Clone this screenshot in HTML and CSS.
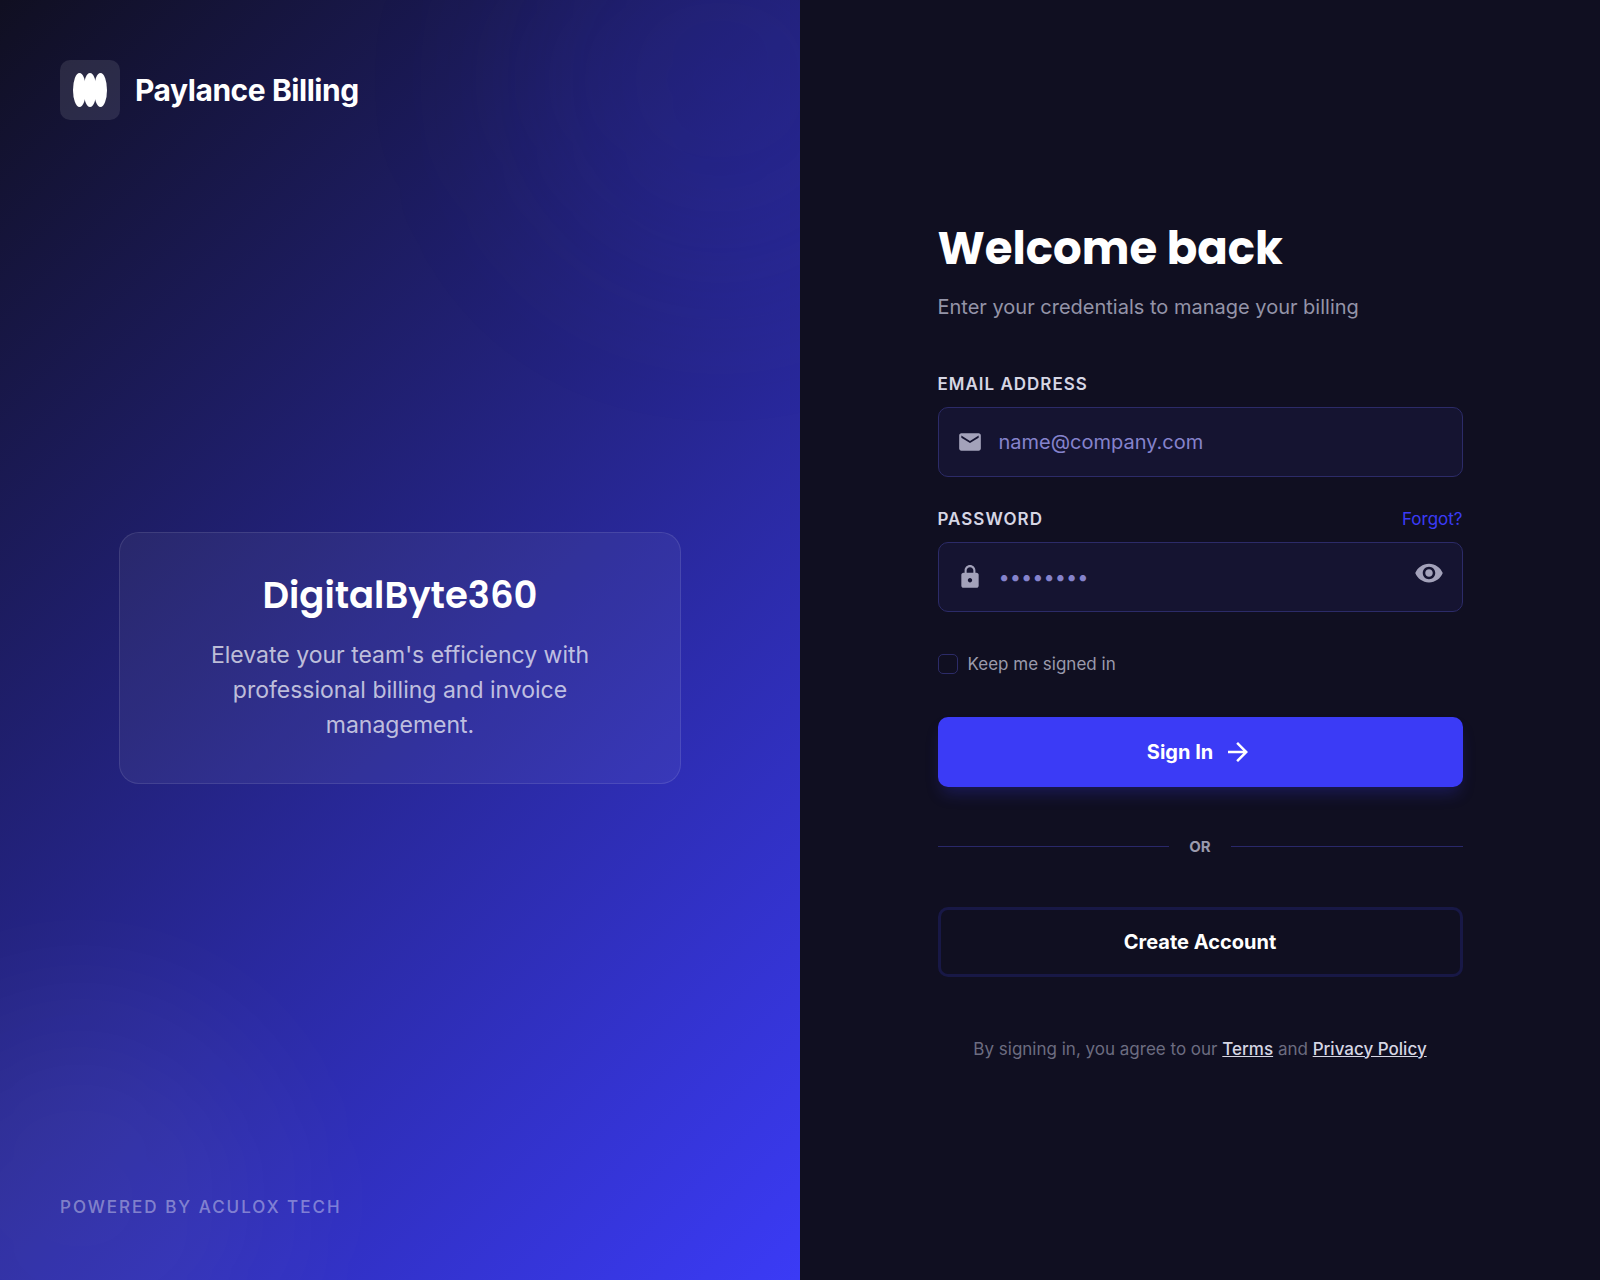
FILE: index.html
```
<!DOCTYPE html>
<html lang="en">
<head>
  <meta charset="UTF-8">
  <meta name="viewport" content="width=device-width, initial-scale=1.0">
  <title>Paylance Billing - Sign In</title>
  <link rel="stylesheet" href="styles.css">
</head>
<body>

<div class="page">
  <aside class="brand-panel">
    <div class="brand">
      <div class="brand-logo">
        <svg width="36" height="36" viewBox="0 0 36 36" fill="#fff" aria-hidden="true">
          <ellipse cx="7.500" cy="18" rx="6.500" ry="17"/>
          <ellipse cx="18" cy="18" rx="6.500" ry="17"/>
          <ellipse cx="28.500" cy="18" rx="6.500" ry="17"/>
        </svg>
      </div>
      <span class="brand-name">Paylance Billing</span>
    </div>

    <div class="promo">
      <h2>DigitalByte360</h2>
      <p>Elevate your team's efficiency with professional billing and invoice management.</p>
    </div>

    <p class="powered">POWERED BY ACULOX TECH</p>
  </aside>

  <main class="form-panel">
    <div class="form-wrap">
      <h1>Welcome back</h1>
      <p class="subtitle">Enter your credentials to manage your billing</p>

      <form>
        <div class="field">
          <label for="email">EMAIL ADDRESS</label>
          <div class="input-box">
            <svg class="icon" width="26" height="26" viewBox="0 0 24 24" aria-hidden="true"><path d="M20 4H4c-1.1 0-2 .9-2 2v12c0 1.1.9 2 2 2h16c1.1 0 2-.9 2-2V6c0-1.1-.9-2-2-2zm0 4l-8 5-8-5V6l8 5 8-5v2z"/></svg>
            <input type="email" id="email" placeholder="name@company.com">
          </div>
        </div>

        <div class="field">
          <div class="field-head">
            <label for="password">PASSWORD</label>
            <a href="#" class="forgot">Forgot?</a>
          </div>
          <div class="input-box">
            <svg class="icon" width="26" height="26" viewBox="0 0 24 24" aria-hidden="true"><path d="M18 8h-1V6c0-2.76-2.24-5-5-5S7 3.24 7 6v2H6c-1.1 0-2 .9-2 2v10c0 1.1.9 2 2 2h12c1.1 0 2-.9 2-2V10c0-1.1-.9-2-2-2zm-6 9c-1.1 0-2-.9-2-2s.9-2 2-2 2 .9 2 2-.9 2-2 2zm3.1-9H8.9V6c0-1.71 1.39-3.1 3.1-3.1s3.1 1.39 3.1 3.1v2z"/></svg>
            <input type="password" id="password" placeholder="••••••••">
            <button type="button" class="toggle" aria-label="Show password">
              <svg class="icon" width="30" height="30" viewBox="0 0 24 24" aria-hidden="true"><path d="M12 4.5C7 4.5 2.73 7.61 1 12c1.73 4.39 6 7.5 11 7.5s9.27-3.11 11-7.5c-1.73-4.39-6-7.5-11-7.5zM12 17c-2.76 0-5-2.24-5-5s2.24-5 5-5 5 2.24 5 5-2.24 5-5 5zm0-8c-1.66 0-3 1.34-3 3s1.34 3 3 3 3-1.34 3-3-1.34-3-3-3z"/></svg>
            </button>
          </div>
        </div>

        <div class="remember">
          <input type="checkbox" id="remember">
          <label for="remember">Keep me signed in</label>
        </div>

        <button type="submit" class="btn btn-primary">
          Sign In
          <svg width="30" height="30" viewBox="0 0 24 24" fill="#fff" aria-hidden="true"><path d="M12 4l-1.41 1.41L16.17 11H4v2h12.17l-5.58 5.59L12 20l8-8z"/></svg>
        </button>

        <div class="divider"><span>OR</span></div>

        <button type="button" class="btn btn-outline">Create Account</button>
      </form>

      <p class="legal">By signing in, you agree to our <a href="#">Terms</a> and <a href="#">Privacy Policy</a></p>
    </div>
  </main>
</div>

</body>
</html>
```
FILE: styles.css
```
* {
  box-sizing: border-box;
}
body {
  margin: 0;
  font-family: 'Inter', sans-serif;
  background: #100f21;
  color: #fff;
}
h1, h2, p {
  margin: 0;
}
h1, h2 {
  font-family: 'Poppins', 'Inter', sans-serif;
}
.page {
  display: grid;
  grid-template-columns: 1fr 1fr;
  min-height: 100vh;
}

/* left side */
.brand-panel {
  position: relative;
  overflow: hidden;
  display: flex;
  flex-direction: column;
  justify-content: space-between;
  padding: 60px;
  background: linear-gradient(135deg, #100f21 0%, #3b3bf6 100%);
}
/* soft glows in the corners */
.brand-panel::before,
.brand-panel::after {
  content: "";
  position: absolute;
  width: 400px;
  height: 400px;
  border-radius: 50%;
  filter: blur(80px);
}
.brand-panel::before {
  top: -120px;
  right: -120px;
  background: rgba(59, 59, 246, 0.1);
}
.brand-panel::after {
  bottom: -120px;
  left: -120px;
  background: rgba(255, 255, 255, 0.05);
}
.brand {
  display: flex;
  align-items: center;
  gap: 15px;
}
.brand-logo {
  display: flex;
  align-items: center;
  justify-content: center;
  width: 60px;
  height: 60px;
  border-radius: 10px;
  background: rgba(255, 255, 255, 0.1);
}
.brand-name {
  font-size: 30px;
  font-weight: 700;
  letter-spacing: -0.015em;
}
.promo {
  align-self: center;
  width: 100%;
  max-width: 562px;
  padding: 40px 60px;
  text-align: center;
  border: 1px solid rgba(255, 255, 255, 0.1);
  border-radius: 20px;
  background: rgba(255, 255, 255, 0.05);
}
.promo h2 {
  margin-bottom: 20px;
  font-size: 37px;
  font-weight: 600;
  line-height: 45px;
}
.promo p {
  font-size: 23px;
  line-height: 35px;
  color: rgba(255, 255, 255, 0.7);
}
.powered {
  font-size: 17px;
  font-weight: 500;
  line-height: 25px;
  letter-spacing: 2px;
  color: rgba(255, 255, 255, 0.4);
}

/* right side */
.form-panel {
  display: flex;
  align-items: center;
  justify-content: center;
  padding: 40px;
}
.form-wrap {
  width: 100%;
  max-width: 525px;
}
h1 {
  font-size: 45px;
  font-weight: 700;
  line-height: 60px;
}
.subtitle {
  margin: 13px 0 50px;
  font-size: 20px;
  line-height: 30px;
  color: #9494a8;
}
.field {
  display: flex;
  flex-direction: column;
  gap: 10px;
  margin-bottom: 30px;
}
.field label {
  font-size: 17px;
  font-weight: 600;
  line-height: 25px;
  letter-spacing: 1px;
  color: #d6d6e4;
}
.field-head {
  display: flex;
  justify-content: space-between;
  line-height: 25px;
}
.forgot {
  font-size: 17px;
  color: #3b3bf6;
  text-decoration: none;
}
.input-box {
  display: flex;
  align-items: center;
  gap: 16px;
  height: 70px;
  padding: 0 18px;
  border: 1px solid #2c2b68;
  border-radius: 10px;
  background: #151431;
}
.icon {
  display: block;
  flex-shrink: 0;
  fill: #a3a2ba;
}
.input-box input {
  flex: 1;
  min-width: 0;
  padding: 0;
  border: none;
  outline: none;
  background: none;
  color: #fff;
  font-family: inherit;
  font-size: 20px;
}
.input-box input::placeholder {
  color: #8583cc;
  opacity: 1;
}
.toggle {
  padding: 0 0 8px;
  border: none;
  background: none;
  cursor: pointer;
}
.remember {
  display: flex;
  align-items: center;
  gap: 10px;
  margin: 40px 0;
}
.remember input {
  appearance: none;
  width: 20px;
  height: 20px;
  margin: 0;
  border: 1px solid #2c2b68;
  border-radius: 5px;
}
.remember input:checked {
  background: #3b3bf6;
}
.remember label {
  font-size: 17px;
  line-height: 25px;
  color: #9a9aac;
}
.btn {
  display: flex;
  align-items: center;
  justify-content: center;
  gap: 10px;
  width: 100%;
  height: 70px;
  border: none;
  border-radius: 10px;
  color: #fff;
  font-family: inherit;
  font-size: 20px;
  font-weight: 700;
  cursor: pointer;
}
.btn-primary {
  background: #3b3bf6;
  box-shadow: 0 10px 16px -4px rgba(59, 59, 246, 0.25);
}
.btn-outline {
  border: 3px solid #181846;
  background: none;
}
.divider {
  display: flex;
  align-items: center;
  gap: 20px;
  margin: 50px 0;
  font-size: 15px;
  font-weight: 700;
  line-height: 20px;
  color: #9a9aac;
}
.divider::before,
.divider::after {
  content: "";
  flex: 1;
  height: 1px;
  background: #29286a;
}
.legal {
  margin-top: 60px;
  font-size: 17px;
  line-height: 25px;
  text-align: center;
  color: #6c6c80;
}
.legal a {
  color: #d6d6e4;
  font-weight: 500;
}
```
